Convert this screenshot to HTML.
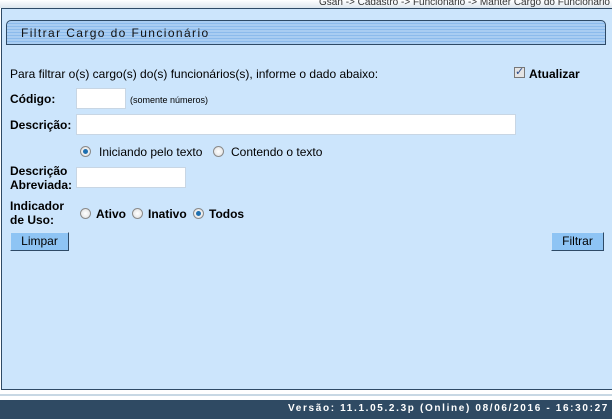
<!DOCTYPE html>
<html><head><meta charset="utf-8"><style>
body{margin:0;width:612px;height:419px;overflow:hidden;background:#fff;font-family:"Liberation Sans",Arial,sans-serif;position:relative}
.crumb{position:absolute;right:2px;top:-2px;font-size:10px;line-height:10px;color:#333}
.top{position:absolute;left:0;top:0;width:612px;height:8px;background:linear-gradient(#fff,#dde6ee)}
.panel{position:absolute;left:1px;top:8px;width:612px;height:382px;background:#cce5fc;border:1px solid #2e4a66;border-right:none;box-sizing:border-box}
.title{position:absolute;left:6px;top:20px;width:600px;height:25px;box-sizing:border-box;border:1px solid #2e4a66;border-radius:5px 5px 0 0;background:repeating-linear-gradient(#a9cdf2 0 2px,#8cbbec 2px 3px);font-size:12px;letter-spacing:1.4px;color:#111;padding:5px 0 0 14px}
.t{position:absolute;font-size:12px;color:#000}
b.t{font-weight:bold}
.in{position:absolute;background:#fff;border:1px solid #c8d6e4;box-sizing:border-box}
.r{position:absolute;width:11px;height:11px;border-radius:50%;border:1px solid #8a8a8a;background:radial-gradient(#fff,#ddd);box-sizing:border-box}
.r.on::after{content:"";position:absolute;left:2px;top:2px;width:5px;height:5px;border-radius:50%;background:#1e6fb0}
.btn{position:absolute;height:19px;background:#8ec4f4;border:1px solid #2e4a66;border-top-color:#cfe6fb;border-left-color:#cfe6fb;box-sizing:border-box;font-size:12px;text-align:center;line-height:17px}
.foot{position:absolute;left:0;top:400px;width:612px;height:19px;background:#2f4a63;color:#fff;font-size:10px;font-weight:bold;letter-spacing:1.65px;text-align:right;line-height:17px;padding-right:3px;box-sizing:border-box}
.line{position:absolute;left:0;top:394px;width:612px;height:2px;background:#c8d8e4}
</style></head><body>
<div class="top"></div>
<div class="crumb">Gsan -&gt; Cadastro -&gt; Funcionario -&gt; Manter Cargo do Funcionario</div>
<div class="panel"></div>
<div class="title">Filtrar Cargo do Funcionário</div>
<span class="t" style="left:10px;top:67px">Para filtrar o(s) cargo(s) do(s) funcionários(s), informe o dado abaixo:</span>
<div style="position:absolute;left:514px;top:67px;width:11px;height:11px;border:1px solid #777;background:#e4e4e4;box-sizing:border-box;font-size:11px;line-height:8px;color:#2a4a8a">✓</div>
<b class="t" style="left:529px;top:67px">Atualizar</b>
<b class="t" style="left:10px;top:92px">Código:</b>
<div class="in" style="left:76px;top:88px;width:50px;height:21px"></div>
<span class="t" style="left:130px;top:95px;font-size:9px">(somente números)</span>
<b class="t" style="left:10px;top:118px">Descrição:</b>
<div class="in" style="left:76px;top:114px;width:440px;height:21px"></div>
<div class="r on" style="left:80px;top:146px"></div>
<span class="t" style="left:99px;top:145px">Iniciando pelo texto</span>
<div class="r" style="left:213px;top:146px"></div>
<span class="t" style="left:231px;top:145px">Contendo o texto</span>
<b class="t" style="left:10px;top:164px;line-height:14px">Descrição<br>Abreviada:</b>
<div class="in" style="left:76px;top:167px;width:110px;height:21px"></div>
<b class="t" style="left:10px;top:199px;line-height:14px">Indicador<br>de Uso:</b>
<div class="r" style="left:80px;top:208px"></div>
<b class="t" style="left:96px;top:207px">Ativo</b>
<div class="r" style="left:132px;top:208px"></div>
<b class="t" style="left:148px;top:207px">Inativo</b>
<div class="r on" style="left:193px;top:208px"></div>
<b class="t" style="left:209px;top:207px">Todos</b>
<div class="btn" style="left:10px;top:232px;width:59px">Limpar</div>
<div class="btn" style="left:551px;top:232px;width:53px">Filtrar</div>
<div class="line"></div>
<div class="foot">Versão: 11.1.05.2.3p (Online) 08/06/2016 - 16:30:27</div>
</body></html>
